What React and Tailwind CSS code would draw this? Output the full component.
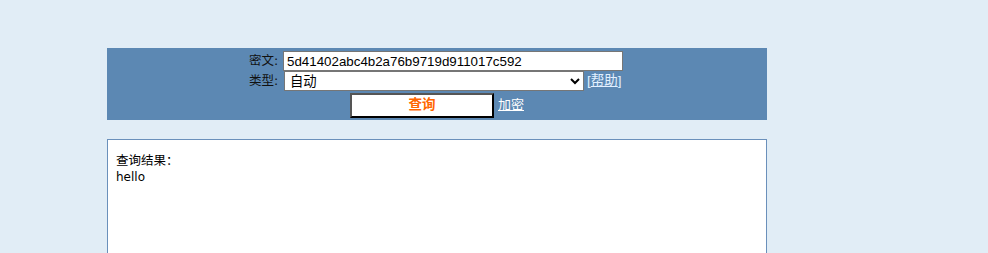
export default function App() {
  return (
    <div className="min-h-screen bg-[#e1edf6] pt-[48px] font-['DejaVu_Sans','Noto_Sans_CJK_SC',sans-serif] text-[12px] text-black">
      {/* 查询面板 */}
      <div className="ml-[107px] w-[660px] h-[72px] bg-[#5c88b3] pt-[3px]">
        <div className="w-[374px] ml-[142px]">
          <div className="flex items-center h-[20px]">
            <span className="w-[34px] text-[12.5px] text-[#111]">密文:</span>
            <input
              className="w-[340px] h-[20px] border border-[#767676] bg-white px-[3px] text-[13.33px] font-['Liberation_Sans','Noto_Sans_CJK_SC',sans-serif] outline-none"
              defaultValue="5d41402abc4b2a76b9719d911017c592"
            />
          </div>
          <div className="flex items-center h-[20px]">
            <span className="w-[35px] text-[12.5px] text-[#111]">类型:</span>
            <select className="w-[300px] h-[20px] border border-[#767676] bg-white pl-[1px] text-[13.33px] font-['Liberation_Sans','Noto_Sans_CJK_SC',sans-serif]">
              <option>自动</option>
            </select>
            <a href="#" className="ml-[3px] text-[13.5px] text-[#e2f0ff] font-['Liberation_Sans','Noto_Sans_CJK_SC',sans-serif]">
              [<span className="underline">帮助</span>]
            </a>
          </div>
        </div>
        <div className="flex items-center justify-center h-[26px] mt-[1px]">
          <button className="w-[144px] h-[25px] bg-white border-2 border-t-[#555] border-l-[#555] border-r-black border-b-black text-[13.5px] font-bold text-[#ff6600] font-['Liberation_Sans','Noto_Sans_CJK_SC',sans-serif]">
            查询
          </button>
          <a href="#" className="ml-[4px] text-[13px] text-white underline font-['Liberation_Sans','Noto_Sans_CJK_SC',sans-serif]">
            加密
          </a>
        </div>
      </div>

      {/* 结果 */}
      <div className="ml-[107px] mt-[19px] w-[660px] h-[200px] bg-white border border-[#6a90bb] pt-[12px] px-[8px] leading-[17px]">
        <div className="text-[12.5px]">查询结果：</div>
        <div>hello</div>
      </div>
    </div>
  )
}
